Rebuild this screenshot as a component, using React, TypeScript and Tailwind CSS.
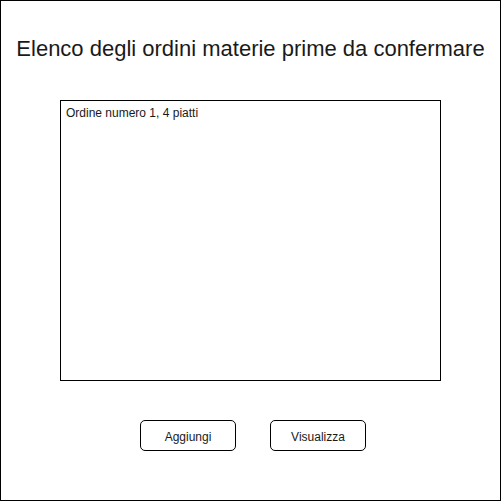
const App = () => {
    const orders = ["Ordine numero 1, 4 piatti"];

    return (
        <div className="h-[501px] w-[501px] bg-white font-['Liberation_Sans',Arial,sans-serif] text-[#1a1a1a]">
            <div className="flex h-[501px] w-[501px] flex-col border border-black">
                <h1 className="mt-[35px] whitespace-nowrap text-center text-[22px] leading-[26px]">
                    Elenco degli ordini materie prime da confermare
                </h1>

                <div className="ml-[59px] mt-[38px] h-[281px] w-[381px] border border-black px-[5px] pt-[5px]">
                    {orders.map((order) => (
                        <div key={order} className="text-[12px] leading-[14px]">
                            {order}
                        </div>
                    ))}
                </div>

                <div className="ml-[139px] mt-[39px] flex gap-[34px]">
                    <button
                        type="button"
                        className="h-[31px] w-[96px] rounded-[5px] border border-black bg-white pt-[3px] text-[12px]"
                    >
                        Aggiungi
                    </button>
                    <button
                        type="button"
                        className="h-[31px] w-[96px] rounded-[5px] border border-black bg-white pt-[3px] text-[12px]"
                    >
                        Visualizza
                    </button>
                </div>
            </div>
        </div>
    );
};

export default App;
